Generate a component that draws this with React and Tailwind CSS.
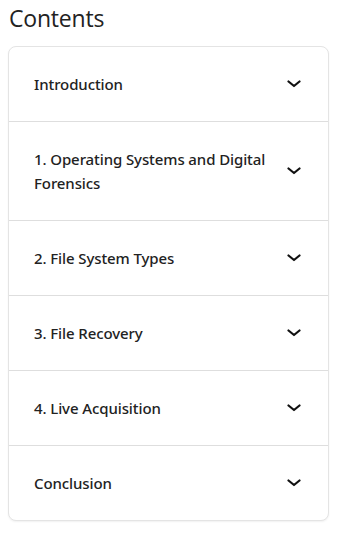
const sections = [
  'Introduction',
  '1. Operating Systems and Digital Forensics',
  '2. File System Types',
  '3. File Recovery',
  '4. Live Acquisition',
  'Conclusion',
]

function Chevron() {
  return (
    <svg width="14" height="8" viewBox="0 0 14 8" fill="none" className="shrink-0">
      <path d="M1.5 1.5 L7 6 L12.5 1.5" stroke="#111" strokeWidth="2.2" strokeLinecap="round" strokeLinejoin="round" />
    </svg>
  )
}

export default function App() {
  return (
    <div className="min-h-screen bg-white pl-2 pr-[17px] pt-[3px]" style={{ fontFamily: '"Open Sans", "Noto Sans", sans-serif' }}>
      <h2 className="pl-[1px] text-[23px] font-normal leading-[30px] tracking-[-0.2px] text-[#222]">Contents</h2>
      <div className="mt-[13px] overflow-hidden rounded-lg border border-[#e4e4e4] bg-white shadow-[0_1px_2px_rgba(0,0,0,0.06)]">
        {sections.map((s, i) => (
          <button
            key={s}
            className={`flex w-full items-center justify-between gap-4 py-[25px] pl-[25px] pr-[27px] text-left ${i > 0 ? 'border-t border-[#dedede]' : ''}`}
          >
            <span className="font-['Noto_Sans',sans-serif] text-[15px] font-medium leading-6 tracking-[-0.1px] text-[#222]">{s}</span>
            <Chevron />
          </button>
        ))}
      </div>
    </div>
  )
}
